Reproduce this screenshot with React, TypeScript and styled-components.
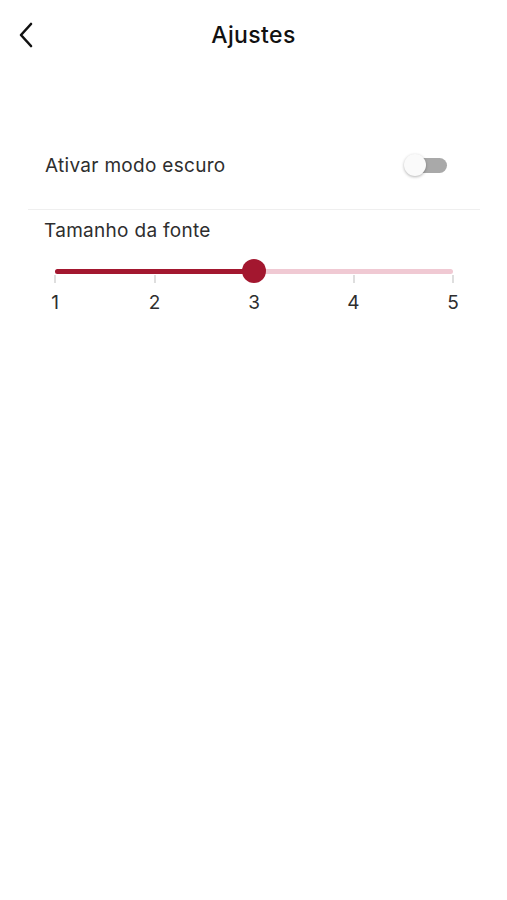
import React, { useState } from "react";
import styled, { createGlobalStyle } from "styled-components";

const GlobalStyle = createGlobalStyle`
  html, body {
    margin: 0;
    padding: 0;
    background: #ffffff;
  }
  body {
    font-family: "Inter", "Liberation Sans", sans-serif;
    color: #2b2b2b;
  }
`;

const Page = styled.div`
  width: 507px;
  min-height: 900px;
  background: #ffffff;
`;

const Header = styled.header`
  height: 70px;
  display: grid;
  grid-template-columns: 60px 1fr 60px;
  align-items: center;
`;

const BackButton = styled.button`
  border: none;
  background: none;
  padding: 0 0 0 18px;
  height: 40px;
  display: flex;
  align-items: center;
  cursor: pointer;
`;

const Title = styled.h1`
  margin: 0;
  text-align: center;
  font-size: 23px;
  font-weight: 500;
  color: #111111;
  letter-spacing: 0.4px;
`;

const Content = styled.main`
  padding: 51px 27px 0 28px;
`;

const Row = styled.div`
  display: flex;
  align-items: center;
  justify-content: space-between;
  height: 88px;
  padding: 0 33px 0 17px;
  border-bottom: 1px solid #efefef;
  margin-bottom: 9px;
`;

const Label = styled.span`
  font-size: 19px;
  color: #2e2e2e;
  letter-spacing: 0.3px;
`;

const Switch = styled.button<{ $on: boolean }>`
  position: relative;
  width: 42px;
  height: 15px;
  border: none;
  padding: 0;
  border-radius: 8px;
  background: ${(p) => (p.$on ? "#e7a3b1" : "#a9a9a9")};
  cursor: pointer;

  &::after {
    content: "";
    position: absolute;
    top: 50%;
    left: ${(p) => (p.$on ? "22px" : "-1px")};
    width: 22px;
    height: 22px;
    border-radius: 50%;
    transform: translateY(-50%);
    background: ${(p) => (p.$on ? "#a3172f" : "#fafafa")};
    box-shadow: 0 1px 3px rgba(0, 0, 0, 0.3);
  }
`;

const SliderBlock = styled.section`
  padding: 0 0 0 16px;
`;

const SliderArea = styled.div`
  position: relative;
  margin: 14px 27px 0 11px;
  height: 60px;
`;

const Track = styled.div`
  position: absolute;
  left: 0;
  right: 0;
  top: 13px;
  height: 5px;
  border-radius: 3px;
  background: #f0c9d3;
`;

const Fill = styled.div`
  position: absolute;
  left: 0;
  top: 0;
  bottom: 0;
  border-radius: 3px;
  background: #a3172f;
`;

const Thumb = styled.div`
  position: absolute;
  top: 15px;
  width: 24px;
  height: 24px;
  border-radius: 50%;
  background: #a3172f;
  transform: translate(-50%, -50%);
`;

const Tick = styled.div`
  position: absolute;
  top: 19px;
  width: 1px;
  height: 8px;
  background: #bdbdbd;
  transform: translateX(-50%);
`;

const TickLabel = styled.span`
  position: absolute;
  top: 37px;
  font-size: 19px;
  color: #2e2e2e;
  transform: translateX(-50%);
  line-height: 1;
`;

const steps = [1, 2, 3, 4, 5];

export default function App() {
  const [dark, setDark] = useState(false);
  const [size] = useState(3);
  const pct = ((size - 1) / (steps.length - 1)) * 100;

  return (
    <Page>
      <GlobalStyle />
      <Header>
        <BackButton aria-label="Voltar">
          <svg width="16" height="26" viewBox="0 0 16 26" fill="none">
            <path
              d="M13 2 L3 13 L13 24"
              stroke="#111"
              strokeWidth="2.6"
              strokeLinecap="round"
              strokeLinejoin="round"
            />
          </svg>
        </BackButton>
        <Title>Ajustes</Title>
        <div />
      </Header>
      <Content>
        <Row>
          <Label>Ativar modo escuro</Label>
          <Switch $on={dark} onClick={() => setDark(!dark)} aria-label="Modo escuro" />
        </Row>
        <SliderBlock>
          <Label>Tamanho da fonte</Label>
          <SliderArea>
            <Track>
              <Fill style={{ width: `${pct}%` }} />
            </Track>
            {steps.map((s, i) => {
              const left = `${(i / (steps.length - 1)) * 100}%`;
              return (
                <React.Fragment key={s}>
                  <Tick style={{ left }} />
                  <TickLabel style={{ left }}>{s}</TickLabel>
                </React.Fragment>
              );
            })}
            <Thumb style={{ left: `${pct}%` }} />
          </SliderArea>
        </SliderBlock>
      </Content>
    </Page>
  );
}
